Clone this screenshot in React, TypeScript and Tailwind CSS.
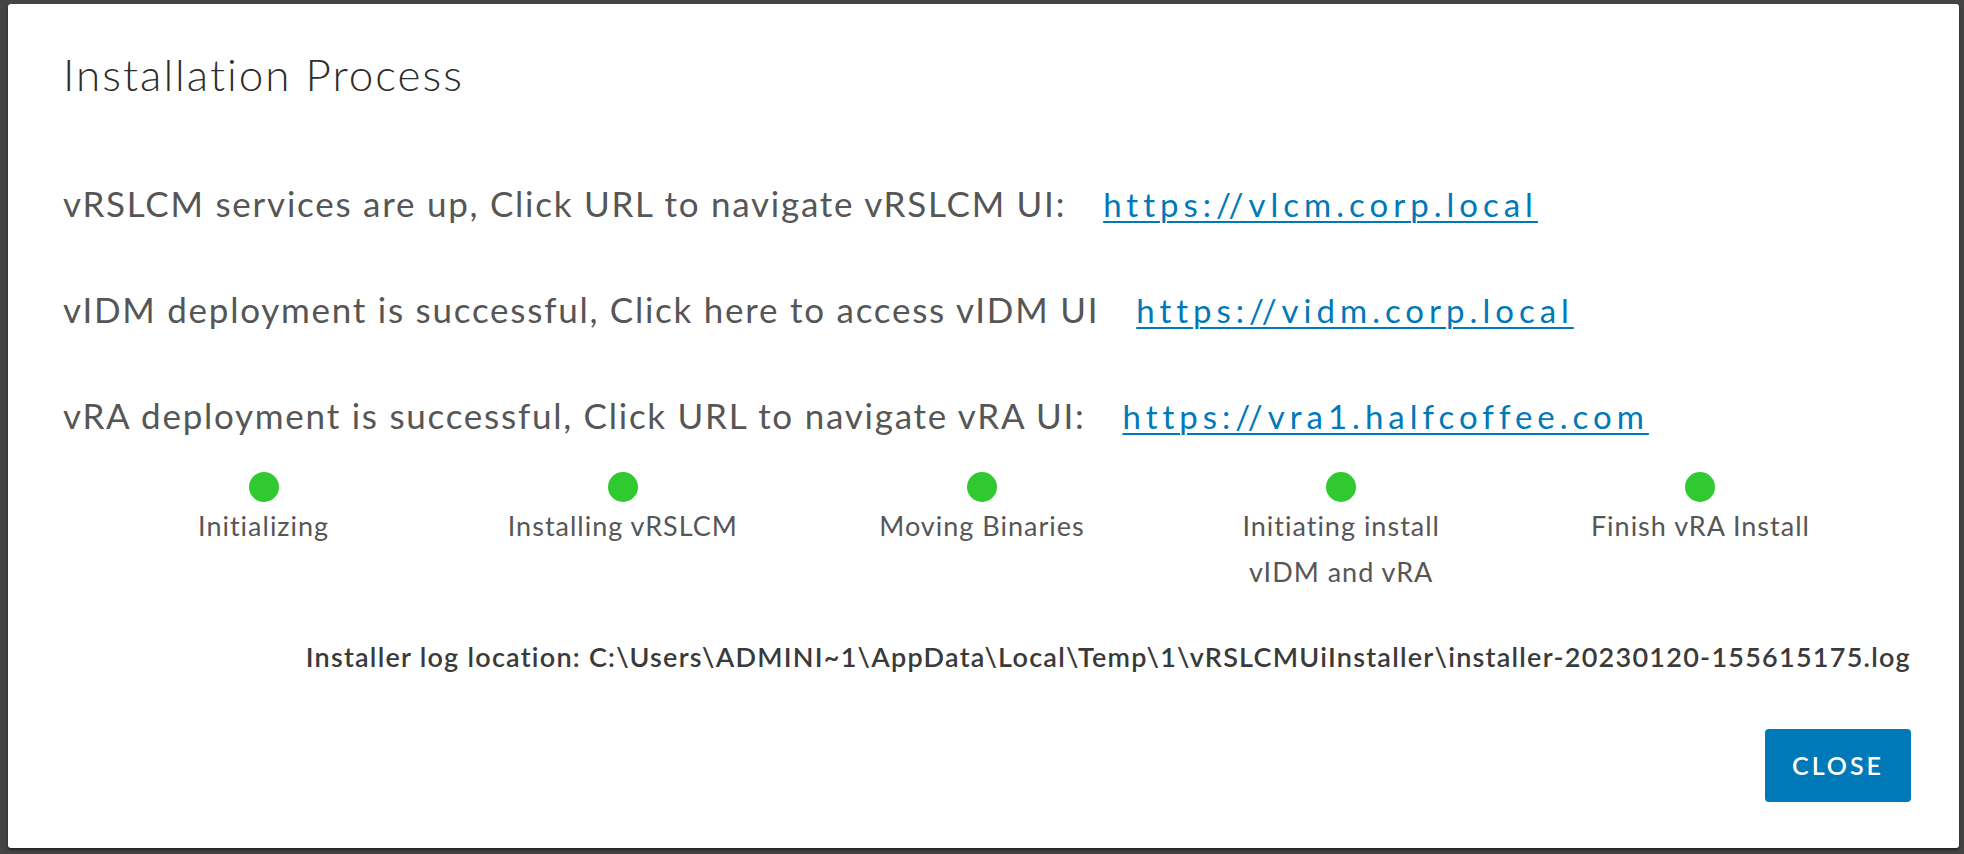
import React from "react";

const steps: { label: string[] }[] = [
  { label: ["Initializing"] },
  { label: ["Installing vRSLCM"] },
  { label: ["Moving Binaries"] },
  { label: ["Initiating install", "vIDM and vRA"] },
  { label: ["Finish vRA Install"] },
];

const rows = [
  { text: "vRSLCM services are up, Click URL to navigate vRSLCM UI:", url: "https://vlcm.corp.local" },
  { text: "vIDM deployment is successful, Click here to access vIDM UI", url: "https://vidm.corp.local" },
  { text: "vRA deployment is successful, Click URL to navigate vRA UI:", url: "https://vra1.halfcoffee.com" },
];

export default function App() {
  return (
    <div
      className="w-full h-screen bg-[#444444] pt-[4px] pl-[8px] pr-[5px] pb-[6px]"
      style={{ fontFamily: "Lato, 'Open Sans', 'Noto Sans', sans-serif" }}
    >
      <div className="h-full bg-white rounded-[3px] shadow-[0_2px_3px_rgba(0,0,0,0.5)] flex flex-col pl-[55px] pr-[48px] pt-[44px] pb-[46px]">
        <h1 className="text-[44px] leading-[52px] font-light text-[#2e2e2e] tracking-[2px]">
          Installation Process
        </h1>

        <div className="mt-[83px] flex flex-col gap-[66px]">
          {rows.map((r) => (
            <div key={r.url} className="flex items-baseline h-[40px] text-[35px] leading-[40px]">
              <span className="text-[#565656] tracking-[1.75px]">{r.text}</span>
              <a
                href="#"
                className="ml-[37px] text-[33px] text-[#0079b8] underline decoration-[2px] underline-offset-[4px] tracking-[5px]"
              >
                {r.url}
              </a>
            </div>
          ))}
        </div>

        <div className="mt-[37px] grid grid-cols-5 pl-[21px] pr-[31px]">
          {steps.map((s) => (
            <div key={s.label[0]} className="flex flex-col items-center">
              <div className="w-[30px] h-[30px] rounded-full bg-[#30c930]" />
              <div className="mt-[1px] text-[27px] leading-[46px] text-[#565656] text-center tracking-[1px]">
                {s.label.map((l) => (
                  <div key={l}>{l}</div>
                ))}
              </div>
            </div>
          ))}
        </div>

        <div className="mt-[46px] text-right text-[27px] leading-[32px] font-semibold text-[#3a3a3a] tracking-[1.25px]">
          Installer log location: C:\Users\ADMINI~1\AppData\Local\Temp\1\vRSLCMUiInstaller\installer-20230120-155615175.log
        </div>

        <div className="mt-auto flex justify-end">
          <button className="w-[146px] h-[73px] rounded-[4px] bg-[#0079b8] text-white text-[25px] font-semibold tracking-[3px]">
            CLOSE
          </button>
        </div>
      </div>
    </div>
  );
}
